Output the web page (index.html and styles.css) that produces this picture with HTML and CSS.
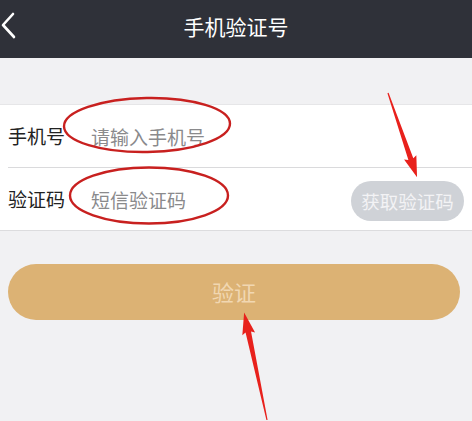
FILE: index.html
```html
<!DOCTYPE html>
<html lang="zh-CN">
<head>
    <meta charset="UTF-8">
    <meta name="viewport" content="width=device-width, initial-scale=1.0">
    <title>手机验证号</title>
    <link rel="stylesheet" href="styles.css">
</head>
<body>
    <div class="page">
        <header class="topbar">
            <span class="back">
                <svg width="16" height="28" viewBox="0 0 16 28"><polyline points="13,2 3,13 14,25" fill="none" stroke="#fff" stroke-width="2.6" stroke-linecap="round" stroke-linejoin="round"/></svg>
            </span>
            <h1 class="title">手机验证号</h1>
        </header>

        <div class="form">
            <div class="row">
                <label class="label">手机号</label>
                <span class="placeholder">请输入手机号</span>
            </div>
            <div class="row">
                <label class="label">验证码</label>
                <span class="placeholder">短信验证码</span>
                <button class="code-btn">获取验证码</button>
            </div>
        </div>

        <div class="actions">
            <button class="submit">验证</button>
        </div>

        <!-- red annotation marks drawn over the screen -->
        <svg class="marks" width="472" height="421" viewBox="0 0 472 421">
            <ellipse cx="147" cy="125" rx="83" ry="27" fill="none" stroke="#c8201f" stroke-width="2.4" transform="rotate(-1 147 125)"/>
            <ellipse cx="149" cy="195.5" rx="79" ry="28" fill="none" stroke="#c8201f" stroke-width="2.4"/>
            <polygon transform="translate(388 93) rotate(70.95)" fill="#e8211c" points="0,-0.6 70,-2.6 68,-6.5 89,0 68,6.5 70,2.6 0,0.6"/>
            <polygon transform="translate(267 420) rotate(-102)" fill="#e8211c" points="0,-0.6 90,-2.8 88,-6.5 110,0 88,6.5 90,2.8 0,0.6"/>
        </svg>
    </div>
</body>
</html>
```

FILE: styles.css
```css
body {
    margin: 0;
    background-color: #f1f1f3;
    font-family: "Noto Sans CJK SC", "Noto Sans", sans-serif;
}
.page {
    position: relative;
    width: 472px;
    height: 421px;
    overflow: hidden;
}
.topbar {
    height: 58px;
    background-color: #2f3139;
    display: flex;
    align-items: center;
    justify-content: center;
    position: relative;
}
.back {
    position: absolute;
    left: 0;
    top: 12px;
    display: flex;
}
.title {
    margin: 0 0 6px;
    font-size: 21px;
    font-weight: normal;
    color: #fff;
    line-height: 1;
}
.form {
    margin-top: 46px;
    background-color: #fff;
    border-top: 1px solid #e6e6e8;
    border-bottom: 1px solid #dcdcde;
    padding-left: 8px;
}
.row {
    height: 62px;
    display: flex;
    align-items: center;
    padding-right: 8px;
}
.row + .row {
    border-top: 1px solid #dadadc;
}
.label {
    width: 83px;
    font-size: 19px;
    color: #222;
    line-height: 1;
    margin-top: -2px;
}
.placeholder {
    font-size: 19px;
    color: #8a8a8c;
    line-height: 1;
    flex: 1;
}
.code-btn {
    width: 113px;
    height: 40px;
    border: none;
    border-radius: 20px;
    background-color: #cfd2d7;
    color: #f3f3f5;
    font-family: inherit;
    font-size: 18.5px;
    padding: 0;
    margin-top: 4px;
}
.actions {
    padding: 33px 12px 0 8px;
}
.submit {
    width: 100%;
    height: 56px;
    border: none;
    border-radius: 28px;
    background-color: #dcb274;
    color: #f1d7b1;
    font-family: inherit;
    font-size: 22px;
    padding: 0 0 2px;
}
.marks {
    position: absolute;
    left: 0;
    top: 0;
    pointer-events: none;
}
```
